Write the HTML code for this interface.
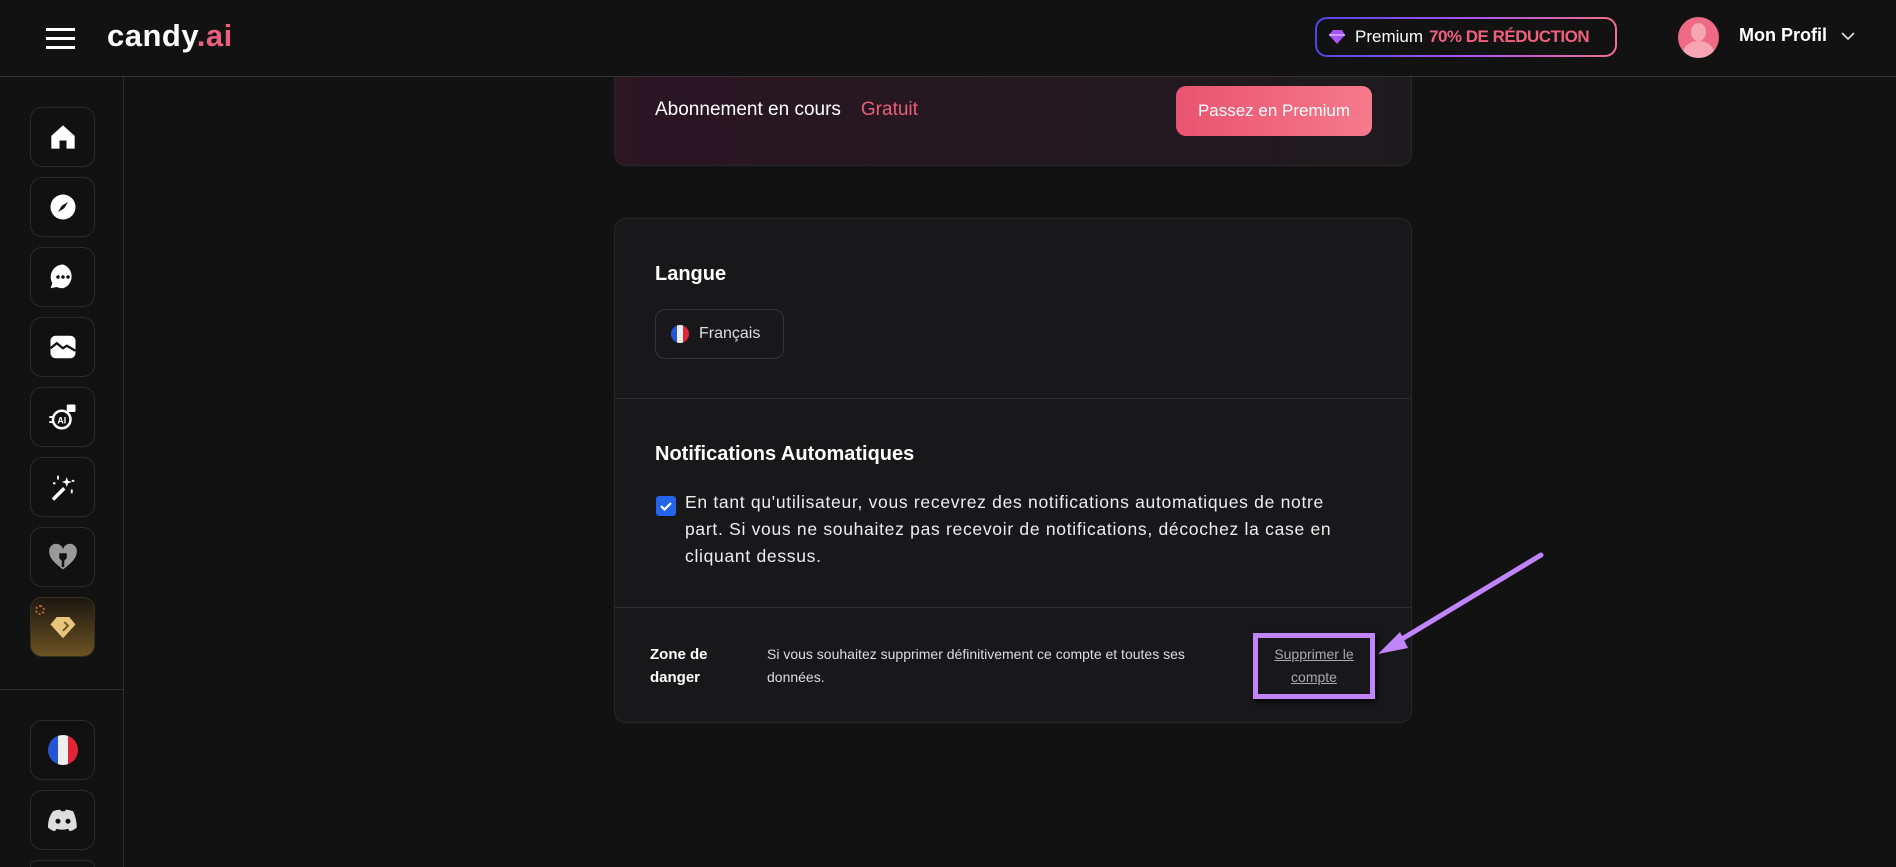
<!DOCTYPE html>
<html><head><meta charset="utf-8"><style>
*{box-sizing:border-box;margin:0;padding:0}
html{width:1896px;height:867px;overflow:hidden}
body{width:1896px;height:867px;background:#121212;font-family:"Liberation Sans",sans-serif;color:#fff;position:relative;overflow:hidden}
.abs{position:absolute}
.hdr{left:0;top:0;width:1896px;height:77px;border-bottom:1px solid #333;background:#121212;z-index:5}
.side{left:123px;top:76px;width:1px;height:791px;background:#2e2e2e}
.sb{position:absolute;left:30px;width:65px;height:60px;border:1px solid #2a2a2a;border-radius:12px;background:#111;display:flex;align-items:center;justify-content:center}
.card{position:absolute;left:614px;width:798px;background:#18181b;border:1px solid #27272a;border-radius:12px}
.z{z-index:6}
</style></head><body>
<div class="abs hdr"></div>
<div class="abs z" style="left:46px;top:28px;width:29px;height:3px;background:#fff"></div>
<div class="abs z" style="left:46px;top:37px;width:29px;height:3px;background:#fff"></div>
<div class="abs z" style="left:46px;top:46px;width:29px;height:3px;background:#fff"></div>
<div class="abs z" style="left:107px;top:18px;font-size:31px;font-weight:bold;letter-spacing:0.5px">candy<span style="color:#ec5e7d">.ai</span></div>

<div class="abs z" style="left:1315px;top:17px;width:302px;height:40px;border-radius:12px;padding:2px;background:linear-gradient(90deg,#4f46e5,#a855f7,#f0718a)">
<div style="width:100%;height:100%;background:#121212;border-radius:10px;display:flex;align-items:center;padding-left:10px;font-size:17px">
<svg width="20" height="16" viewBox="0 0 20 16"><path d="M2 6 6 1h9l3 5-8 9z" fill="#a855f7"/><path d="M2 6h16" stroke="#d8b4fe" stroke-width="1.5"/></svg>
<span style="margin-left:8px">Premium</span><b style="margin-left:6px;color:#f0607e;letter-spacing:-0.5px">70% DE RÉDUCTION</b></div></div>
<div class="abs z" style="left:1678px;top:17px;width:41px;height:41px;border-radius:50%;background:#ef6b85;overflow:hidden">
<div style="position:absolute;left:13px;top:6px;width:15px;height:18px;border-radius:50%;background:#f7a5b3"></div>
<div style="position:absolute;left:5px;top:24px;width:31px;height:24px;border-radius:50% 50% 0 0;background:#f7a5b3"></div></div>
<div class="abs z" style="left:1739px;top:25px;font-size:18px;font-weight:bold">Mon Profil</div>
<svg class="abs z" style="left:1841px;top:32px" width="14" height="9" viewBox="0 0 14 9"><path d="M1 1l6 6 6-6" stroke="#ddd" stroke-width="1.6" fill="none"/></svg>

<div class="abs side"></div>
<div class="sb" style="top:107px"><svg width="28" height="28" viewBox="0 0 24 24"><path d="M12 2 2 11v11h7v-7h6v7h7V11z" fill="#fff"/></svg></div>
<div class="sb" style="top:177px"><svg width="30" height="30" viewBox="0 0 24 24"><circle cx="12" cy="12" r="10" fill="#fff"/><path d="M16 8l-5 3-3 5 5-3z" fill="#111"/></svg></div>
<div class="sb" style="top:247px"><svg width="30" height="30" viewBox="0 0 24 24"><path d="M12 2a10 10 0 0 1 0 19c-2 0-4-.5-5-1l-5 1 1.5-4A10 10 0 0 1 12 2z" fill="#fff"/><circle cx="8" cy="12" r="1.4" fill="#111"/><circle cx="12" cy="12" r="1.4" fill="#111"/><circle cx="16" cy="12" r="1.4" fill="#111"/></svg></div>
<div class="sb" style="top:317px"><svg width="30" height="30" viewBox="0 0 24 24"><rect x="2" y="3" width="20" height="18" rx="4" fill="#fff"/><path d="M2 13l5-4 5 4 3-2 7 4" stroke="#111" stroke-width="1.8" fill="none"/></svg></div>
<div class="sb" style="top:387px"><svg width="32" height="30" viewBox="0 0 24 24"><circle cx="11" cy="14" r="7" fill="none" stroke="#fff" stroke-width="2"/><text x="11" y="17" font-size="7" font-weight="bold" fill="#fff" text-anchor="middle" font-family="Liberation Sans">AI</text><rect x="15" y="2" width="7" height="6" rx="1" fill="#fff"/><path d="M1 12h3M1 16h3" stroke="#fff" stroke-width="1.5"/></svg></div>
<div class="sb" style="top:457px"><svg width="30" height="30" viewBox="0 0 24 24"><path d="M3 21l9-9 2 2-9 9z" fill="#fff"/><path d="M15 4l1 3 3 1-3 1-1 3-1-3-3-1 3-1z" fill="#fff"/><path d="M8 3v3M19 14v3M21 7h-2M6 9H4" stroke="#fff" stroke-width="1.5"/></svg></div>
<div class="sb" style="top:527px"><svg width="30" height="28" viewBox="0 0 24 22"><path d="M12 21C4 15 1 11 1 7a5 5 0 0 1 11-2 5 5 0 0 1 11 2c0 4-3 8-11 14z" fill="#999"/><path d="M9 8h6v4l-2 2v5h-2v-5L9 12z" fill="#111"/></svg></div>
<div class="sb" style="top:597px;background:linear-gradient(180deg,#1c1710,#6b5323);border-color:#3a3020"><svg width="30" height="26" viewBox="0 0 24 20"><path d="M2 8 7 2h10l5 6-10 11z" fill="#e7c57a"/><path d="M13 6l3 3-4 4" stroke="#6b5323" stroke-width="1.5" fill="none"/></svg></div>
<div class="abs" style="left:35px;top:605px;width:10px;height:10px;border-radius:50%;border:2px dotted #c2623c"></div>
<div class="abs" style="left:0;top:689px;width:124px;height:1px;background:#2e2e2e"></div>
<div class="sb" style="top:720px"><div style="width:30px;height:30px;border-radius:50%;background:linear-gradient(90deg,#2455d6 33%,#eee 33%,#eee 66%,#e32636 66%)"></div></div>
<div class="sb" style="top:790px"><svg width="30" height="24" viewBox="0 0 24 18"><path d="M4 2c3-1 5-1.5 6-1l.5 1h3l.5-1c1-.5 3 0 6 1 2 4 3 8 3 13-2 2-4 2.5-5.5 3l-1.5-2c-3 1-6 1-9 0L5.5 18C4 17.5 2 17 0 15c0-5 1-9 4-13z" fill="#ddd"/><circle cx="8" cy="10" r="2" fill="#111"/><circle cx="16" cy="10" r="2" fill="#111"/></svg></div>
<div class="sb" style="top:860px;height:7px;border-bottom:none;border-radius:12px 12px 0 0"></div>

<div class="card" style="top:60px;height:106px;border-top:none;background:linear-gradient(90deg,#2b1622,#1d1a1e);border-radius:0 0 12px 12px">
<div class="abs" style="left:40px;top:39px;font-size:19px">Abonnement en cours<span style="color:#ec5e7d;margin-left:20px">Gratuit</span></div>
<div class="abs" style="left:561px;top:26px;width:196px;height:50px;border-radius:10px;background:linear-gradient(90deg,#e9536f,#f67a8c);display:flex;align-items:center;justify-content:center;font-size:17px">Passez en Premium</div>
</div>

<div class="card" style="top:218px;height:505px">
<div class="abs" style="left:40px;top:44px;font-size:20px;font-weight:bold">Langue</div>
<div class="abs" style="left:40px;top:90px;width:129px;height:50px;border:1px solid #333;border-radius:10px;display:flex;align-items:center;padding-left:15px;font-size:16px;color:#ddd"><span style="width:18px;height:18px;border-radius:50%;background:linear-gradient(90deg,#2455d6 33%,#eee 33%,#eee 66%,#e32636 66%);margin-right:10px"></span>Français</div>
<div class="abs" style="left:0;top:179px;width:796px;height:1px;background:#2e2e2e"></div>
<div class="abs" style="left:40px;top:224px;font-size:20px;font-weight:bold">Notifications Automatiques</div>
<div class="abs" style="left:41px;top:277px;width:20px;height:20px;border-radius:3px;background:#2563eb"><svg width="20" height="20" viewBox="0 0 20 20"><path d="M5 10l3.5 3.5L15 7" stroke="#fff" stroke-width="2.2" fill="none"/></svg></div>
<div class="abs" style="left:70px;top:270px;width:665px;font-size:17.5px;line-height:27px;color:#eee;letter-spacing:0.7px">En tant qu'utilisateur, vous recevrez des notifications automatiques de notre part. Si vous ne souhaitez pas recevoir de notifications, décochez la case en cliquant dessus.</div>
<div class="abs" style="left:0;top:388px;width:796px;height:1px;background:#2e2e2e"></div>
<div class="abs" style="left:35px;top:424px;font-size:15px;font-weight:bold;line-height:23px">Zone de<br>danger</div>
<div class="abs" style="left:152px;top:424px;width:470px;font-size:14px;line-height:23px;color:#ddd">Si vous souhaitez supprimer définitivement ce compte et toutes ses données.</div>
<div class="abs" style="left:638px;top:414px;width:122px;height:66px;border:5px solid #c084fc;box-shadow:2px 3px 5px rgba(0,0,0,.7)"></div>
<div class="abs" style="left:643px;top:424px;width:112px;text-align:center;font-size:14px;line-height:23px;color:#aaa;text-decoration:underline">Supprimer le compte</div>
</div>
<svg class="abs" style="left:1370px;top:550px" width="180" height="115" viewBox="0 0 180 115"><path d="M171 5 22 95" stroke="#c084fc" stroke-width="5" stroke-linecap="round"/><path d="M8 104 30 82 38 98z" fill="#c084fc"/></svg>
</body></html>
